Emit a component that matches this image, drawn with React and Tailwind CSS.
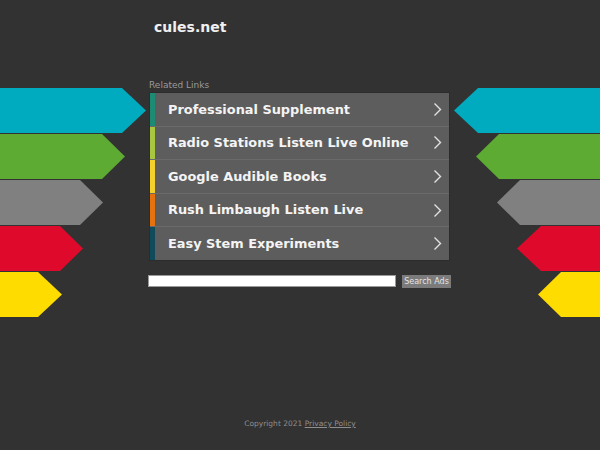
const LINKS = [
  { label: 'Professional Supplement', color: '#1d8a73' },
  { label: 'Radio Stations Listen Live Online', color: '#a9c640' },
  { label: 'Google Audible Books', color: '#f2d22a' },
  { label: 'Rush Limbaugh Listen Live', color: '#e6720f' },
  { label: 'Easy Stem Experiments', color: '#0f4b5a' },
];

const ARROWS = [
  { color: '#00abbf', left: [122, 146], right: [3, 27] },
  { color: '#5dab33', left: [102, 125], right: [25, 48] },
  { color: '#808080', left: [80, 103], right: [46, 69] },
  { color: '#df0a2b', left: [60, 83], right: [66, 90] },
  { color: '#ffdc00', left: [38, 62], right: [87, 110] },
];

function LeftArrows() {
  return (
    <svg width="149" height="240" className="shrink-0">
      {ARROWS.map((a, i) => {
        const y = 9 + i * 46;
        const [b, t] = a.left;
        return (
          <polygon
            key={i}
            fill={a.color}
            points={`0,${y} ${b},${y} ${t},${y + 22.5} ${b},${y + 45} 0,${y + 45}`}
          />
        );
      })}
    </svg>
  );
}

function RightArrows() {
  return (
    <svg width="149" height="240" className="shrink-0">
      {ARROWS.map((a, i) => {
        const y = 9 + i * 46;
        const [t, b] = a.right;
        return (
          <polygon
            key={i}
            fill={a.color}
            points={`149,${y} ${b},${y} ${t},${y + 22.5} ${b},${y + 45} 149,${y + 45}`}
          />
        );
      })}
    </svg>
  );
}

function Chevron() {
  return (
    <svg width="9" height="15" viewBox="0 0 9 15" className="shrink-0">
      <path d="M1.5 1.5 L7.5 7.5 L1.5 13.5" fill="none" stroke="#e2e2e2" strokeWidth="1.4" />
    </svg>
  );
}

export default function App() {
  return (
    <div
      className="w-[600px] h-[450px] bg-[#323232] flex flex-col overflow-hidden"
      style={{ fontFamily: '"DejaVu Sans", sans-serif' }}
    >
      {/* Header */}
      <div className="h-[79px] pl-[154px] pt-[15px] shrink-0">
        <span className="text-[14px] leading-[18px] font-bold text-[#f0f0f0]">cules.net</span>
      </div>

      {/* Main */}
      <div className="flex items-start">
        <LeftArrows />

        <div className="w-[302px] shrink-0 flex flex-col">
          <p className="text-[9px] leading-[13px] text-[#9a9a9a]">Related Links</p>

          <div className="w-[301px] border border-[#2c2c2c] bg-[#6a6a6a] flex flex-col gap-px">
            {LINKS.map(l => (
              <div key={l.label} className="h-[32.6px] flex items-stretch bg-[#5d5d5d]">
                <span className="w-[5px] shrink-0" style={{ background: l.color }} />
                <div className="flex-1 flex items-center justify-between pl-[13px] pr-[7px]">
                  <span className="text-[12.9px] font-bold text-[#f4f4f4] whitespace-nowrap">{l.label}</span>
                  <Chevron />
                </div>
              </div>
            ))}
          </div>

          <div className="mt-[14px] flex items-center -ml-px">
            <div className="w-[248px] h-[12px] bg-white border border-[#9a9a9a]" />
            <button className="ml-[6px] w-[49px] h-[13px] bg-[#7b7b7b] text-[8px] leading-[13px] text-[#e4e4e4]">
              Search Ads
            </button>
          </div>
        </div>

        <RightArrows />
      </div>

      <div className="flex-1" />

      {/* Footer */}
      <div className="pb-[21px] flex justify-center text-[7.5px] leading-[10px] text-[#8e8e8e]">
        <span>Copyright 2021&nbsp;</span>
        <span className="underline">Privacy Policy</span>
      </div>
    </div>
  );
}
